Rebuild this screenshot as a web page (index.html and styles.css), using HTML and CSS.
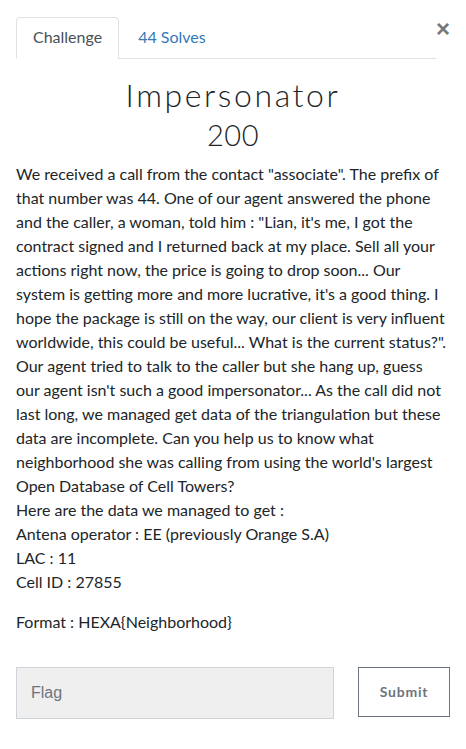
FILE: index.html
```html
<!DOCTYPE html>
<html>
<head>
<meta charset="utf-8">
<link rel="stylesheet" href="styles.css">
</head>
<body>
<div class="modal-body">
  <div class="top">
    <ul class="nav-tabs">
      <li class="tab active">Challenge</li>
      <li class="tab link">44 Solves</li>
    </ul>
    <button class="close">×</button>
  </div>
  <h2 class="name">Impersonator</h2>
  <h3 class="value">200</h3>
  <div class="desc">
    <p>We received a call from the contact "associate". The prefix of that number was 44. One of our agent answered the phone and the caller, a woman, told him : "Lian, it's me, I got the contract signed and I returned back at my place. Sell all your actions right now, the price is going to drop soon... Our system is getting more and more lucrative, it's a good thing. I hope the package is still on the way, our client is very influent worldwide, this could be useful... What is the current status?". Our agent tried to talk to the caller but she hang up, guess our agent isn't such a good impersonator... As the call did not last long, we managed get data of the triangulation but these data are incomplete. Can you help us to know what neighborhood she was calling from using the world's largest Open Database of Cell Towers?<br>Here are the data we managed to get :<br>Antena operator : EE (previously Orange S.A)<br>LAC : 11<br>Cell ID : 27855</p>
    <p>Format : HEXA{Neighborhood}</p>
  </div>
  <div class="submit-row">
    <input class="flag" type="text" placeholder="Flag">
    <button class="submit">Submit</button>
  </div>
</div>
</body>
</html>
```
FILE: styles.css
```css
* { box-sizing: border-box; }
html, body { margin: 0; padding: 0; background: #fff; }
body {
  font-family: Lato, "Open Sans", sans-serif;
  font-size: 16px;
  line-height: 24px;
  color: #212529;
}
.modal-body { padding: 17px 16px 16px 16px; }
.top { display: flex; align-items: flex-start; }
.nav-tabs {
  list-style: none;
  margin: 0;
  padding: 0;
  display: flex;
  flex: 1;
  border-bottom: 1px solid #dee2e6;
}
.tab {
  padding: 7px 16px 9px 16px;
  border: 1px solid transparent;
  border-top-left-radius: 4px;
  border-top-right-radius: 4px;
  margin-bottom: -1px;
  line-height: 24px;
}
.tab.active {
  color: #495057;
  border-color: #dee2e6 #dee2e6 #fff;
  background: #fff;
}
.tab.link { color: #337ab7; padding-left: 18px; }
.close {
  border: 0;
  background: none;
  padding: 0;
  margin-top: 0;
  font-family: "Liberation Sans", Arial, sans-serif;
  font-size: 24px;
  font-weight: 700;
  line-height: 24px;
  color: #777;
  width: 14px;
}
.name {
  margin: 17px 0 0 0;
  text-align: center;
  font-family: Lato, sans-serif;
  font-weight: 300;
  font-size: 32px;
  line-height: 38px;
  letter-spacing: 2.6px;
  color: #212529;
}
.value {
  margin: 4px 0 0 0;
  text-align: center;
  font-family: Lato, sans-serif;
  font-weight: 300;
  font-size: 29px;
  line-height: 34px;
  letter-spacing: 0.5px;
  color: #212529;
}
.desc { margin-top: 10px; }
.desc p { margin: 0 0 16px 0; }
.submit-row {
  display: flex;
  justify-content: space-between;
  align-items: flex-start;
  margin-top: 33px;
}
.flag {
  width: 318px;
  height: 52px;
  background: #efefef;
  border: 1px solid #ced4da;
  border-radius: 0;
  padding: 0 14px;
  font-family: "Liberation Sans", Arial, sans-serif;
  font-size: 16px;
  color: #495057;
}
.flag::placeholder { color: #6c757d; }
.submit {
  width: 92px;
  height: 50px;
  padding-bottom: 3px;
  background: #fff;
  border: 1px solid #6c757d;
  border-radius: 0;
  font-family: Lato, sans-serif;
  font-weight: 700;
  font-size: 14px;
  letter-spacing: 0.8px;
  color: #6c757d;
}
```
